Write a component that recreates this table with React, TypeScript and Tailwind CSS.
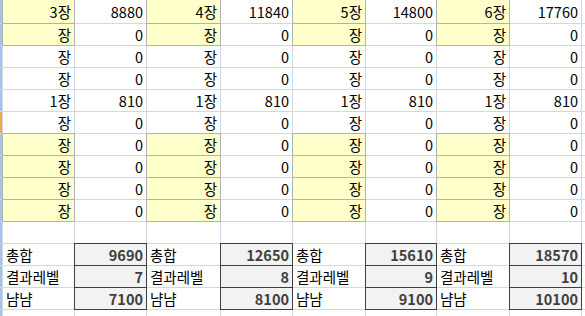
import React from "react"

const heads = ["3장", "4장", "5장", "6장"]
const firstVals = [8880, 11840, 14800, 17760]
const totals = [9690, 12650, 15610, 18570]
const levels = [7, 8, 9, 10]
const yums = [7100, 8100, 9100, 10100]

type Row =
  | { kind: "data"; label: (g: number) => string; value: (g: number) => number; yellow: boolean }
  | { kind: "empty" }
  | { kind: "sum"; label: string; values: number[] }

const rows: Row[] = [
  { kind: "data", label: (g) => heads[g], value: (g) => firstVals[g], yellow: true },
  { kind: "data", label: () => "장", value: () => 0, yellow: true },
  { kind: "data", label: () => "장", value: () => 0, yellow: false },
  { kind: "data", label: () => "장", value: () => 0, yellow: false },
  { kind: "data", label: () => "1장", value: () => 810, yellow: false },
  { kind: "data", label: () => "장", value: () => 0, yellow: false },
  { kind: "data", label: () => "장", value: () => 0, yellow: true },
  { kind: "data", label: () => "장", value: () => 0, yellow: true },
  { kind: "data", label: () => "장", value: () => 0, yellow: true },
  { kind: "data", label: () => "장", value: () => 0, yellow: true },
  { kind: "empty" },
  { kind: "sum", label: "총합", values: totals },
  { kind: "sum", label: "결과레벨", values: levels },
  { kind: "sum", label: "냠냠", values: yums },
  { kind: "empty" },
]

// no background here, each cell picks its own
const cell = "flex items-center pt-[2px] overflow-hidden whitespace-nowrap"

export default function App() {
  return (
    <div className="w-[585px] h-[316px] overflow-hidden bg-white font-['Noto_Sans_CJK_KR',sans-serif] text-[14.5px] leading-none text-black">
      <div className="grid grid-cols-[2px_71px_71px_73px_71px_72px_70px_72px_71px_1fr] grid-rows-[23px_repeat(14,21px)] gap-px bg-[#d0d7e5]">
        {rows.map((row, r) => (
          <React.Fragment key={r}>
            <div className={r === 5 ? "bg-[#f3a64a]" : "bg-[#a9c1e4]"} />
            {[0, 1, 2, 3].map((g) => {
              if (row.kind === "empty") {
                return (
                  <React.Fragment key={g}>
                    <div className={`${cell} bg-white`} />
                    <div className={`${cell} bg-white`} />
                  </React.Fragment>
                )
              }
              if (row.kind === "sum") {
                return (
                  <React.Fragment key={g}>
                    <div className={`${cell} bg-white pl-[3px]`}>{row.label}</div>
                    <div className={`${cell} justify-end pr-[3px] bg-[#f2f2f2] outline outline-[#3f3f3f] font-bold text-[#3f3f3f]`}>
                      {row.values[g]}
                    </div>
                  </React.Fragment>
                )
              }
              return (
                <React.Fragment key={g}>
                  <div
                    className={`${cell} justify-end pr-[3px] ${
                      row.yellow ? "bg-[#ffffcc] outline outline-[#b2b2b2]" : "bg-white"
                    }`}
                  >
                    {row.label(g)}
                  </div>
                  <div className={`${cell} bg-white justify-end pr-[3px]`}>{row.value(g)}</div>
                </React.Fragment>
              )
            })}
            <div className="bg-white" />
          </React.Fragment>
        ))}
      </div>
    </div>
  )
}
